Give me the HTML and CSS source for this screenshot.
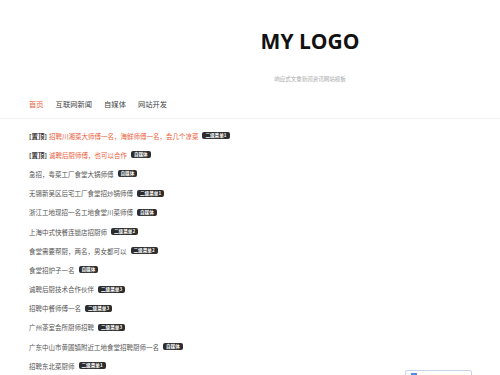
FILE: index.html
```html
<!DOCTYPE html>
<html lang="zh-CN">
<head>
<meta charset="utf-8">
<title>MY LOGO</title>
<link rel="stylesheet" href="styles.css">
</head>
<body>
<header class="header">
  <div class="brand">
    <div class="logo">MY LOGO</div>
    <div class="tagline">响应式文章新闻资讯网站模板</div>
  </div>
</header>
<nav class="nav">
  <a class="nav-item active">首页</a>
  <a class="nav-item">互联网新闻</a>
  <a class="nav-item">自媒体</a>
  <a class="nav-item">网站开发</a>
</nav>
<ul class="list">
  <li class="item"><span class="top">[置顶]</span> <span class="hot">招聘川湘菜大师傅一名，海鲜师傅一名，会几个凉菜</span><span class="badge">二级菜单1</span></li>
  <li class="item"><span class="top">[置顶]</span> <span class="hot">诚聘后厨师傅，也可以合作</span><span class="badge">自媒体</span></li>
  <li class="item">急招，粤菜工厂食堂大锅师傅<span class="badge">自媒体</span></li>
  <li class="item">无锡新吴区后宅工厂食堂招炒锅师傅<span class="badge">二级菜单1</span></li>
  <li class="item">浙江工地现招一名工地食堂川菜师傅<span class="badge">自媒体</span></li>
  <li class="item">上海中式快餐连锁店招厨师<span class="badge">二级菜单2</span></li>
  <li class="item">食堂需要帮厨，两名，男女都可以<span class="badge">二级菜单2</span></li>
  <li class="item">食堂招炉子一名<span class="badge">自媒体</span></li>
  <li class="item">诚聘后厨技术合作伙伴<span class="badge">二级菜单3</span></li>
  <li class="item">招聘中餐师傅一名<span class="badge">二级菜单3</span></li>
  <li class="item">广州茶室会所厨师招聘<span class="badge">二级菜单3</span></li>
  <li class="item">广东中山市黄圃镇附近工地食堂招聘厨师一名<span class="badge">自媒体</span></li>
  <li class="item">招聘东北菜厨师<span class="badge">二级菜单1</span></li>
</ul>
<div class="widget"><span class="widget-bar"></span></div>
</body>
</html>
```
FILE: styles.css
```css
html, body {
  margin: 0;
  padding: 0;
  background: #fff;
  overflow: hidden;
  height: 375px;
}
body {
  font-family: "Noto Sans CJK SC", "Noto Sans", sans-serif;
  color: #555;
  position: relative;
}
.header {
  height: 90px;
  display: flex;
  padding-left: 262px;
}
.brand {
  display: flex;
  flex-direction: column;
  align-items: center;
  width: 96px;
}
.logo {
  font-family: "Open Sans", "Liberation Sans", sans-serif;
  font-weight: 700;
  font-size: 21px;
  line-height: 24px;
  margin-top: 29px;
  color: #111;
  white-space: nowrap;
}
.tagline {
  margin-top: 22px;
  font-size: 5.5px;
  line-height: 8px;
  color: #aaa;
  white-space: nowrap;
}
.nav {
  display: flex;
  gap: 12px;
  padding-left: 29px;
  height: 28px;
  align-items: center;
  border-bottom: 1px solid #f2f2f2;
}
.nav-item {
  font-size: 7.3px;
  color: #444;
}
.nav-item.active {
  color: #e8603c;
}
.list {
  list-style: none;
  margin: 7px 0 0;
  padding: 0 0 0 29px;
}
.item {
  height: 19.2px;
  display: flex;
  align-items: center;
  font-size: 6.5px;
  color: #555;
  white-space: nowrap;
}
.top {
  color: #333;
  font-weight: 700;
  margin-right: 2px;
}
.hot {
  color: #e8603c;
}
.badge {
  margin-left: 4px;
  background: #2d2d2d;
  color: #fff;
  font-size: 4.6px;
  font-weight: 700;
  line-height: 7px;
  height: 7px;
  padding: 0 3px;
  border-radius: 2px;
}
.widget {
  position: absolute;
  left: 405px;
  top: 370px;
  width: 65px;
  height: 20px;
  border: 1px solid #c9d6ea;
  border-radius: 2px;
}
.widget-bar {
  position: absolute;
  left: 5px;
  top: 2px;
  width: 6px;
  height: 2px;
  background: #4a8ee6;
}
```
